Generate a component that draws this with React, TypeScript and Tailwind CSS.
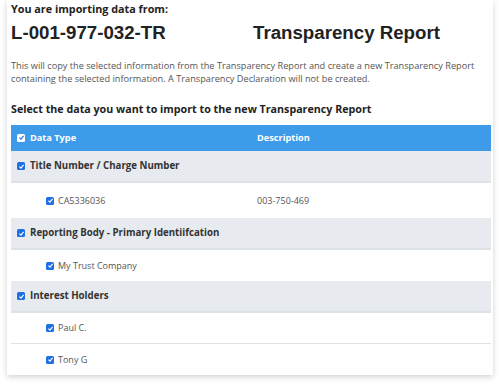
import type { FC } from 'react';

const Check: FC<{ header?: boolean }> = ({ header }) => (
  <span
    className={`inline-flex h-[8px] w-[8px] shrink-0 items-center justify-center rounded-[1.5px] ${
      header ? 'bg-white' : 'bg-[#1f6fe5]'
    }`}
  >
    <svg viewBox="0 0 10 10" className="h-[7px] w-[7px]">
      <path
        d="M2 5.2 L4.2 7.3 L8 2.8"
        fill="none"
        stroke={header ? '#1f6fe5' : 'white'}
        strokeWidth="1.6"
      />
    </svg>
  </span>
);

type Row = { label: string; desc?: string; group?: boolean };

const rows: Row[] = [
  { label: 'Title Number / Charge Number', group: true },
  { label: 'CA5336036', desc: '003-750-469' },
  { label: 'Reporting Body - Primary Identiifcation', group: true },
  { label: 'My Trust Company' },
  { label: 'Interest Holders', group: true },
  { label: 'Paul C.' },
  { label: 'Tony G' },
];

const App: FC = () => {
  return (
    <div className="h-[387px] w-[499px] overflow-hidden bg-white font-['Open_Sans',sans-serif]">
      <div className="ml-[7px] w-[486px] bg-white pl-[4px] pr-[2px] shadow-[0_2px_6px_rgba(0,0,0,0.18)]">
        <div className="pt-[1px] text-[10.8px] font-bold leading-[15px] text-[#222]">You are importing data from:</div>
        <div className="mt-[6px] grid grid-cols-2 font-['Liberation_Sans',Arial,sans-serif] text-[18.7px] font-bold leading-[22px] text-[#222]">
          <span>L-001-977-032-TR</span>
          <span className="pl-[2px]">Transparency Report</span>
        </div>
        <p className="mt-[15px] text-[9.2px] leading-[13px] text-[#555]">
          This will copy the selected information from the Transparency Report and create a new Transparency Report
          containing the selected information. A Transparency Declaration will not be created.
        </p>
        <div className="mt-[17px] text-[10.7px] font-bold leading-[15px] text-[#222]">
          Select the data you want to import to the new Transparency Report
        </div>
        <div className="mt-[8px]">
          <div className="grid h-[26px] grid-cols-2 items-center bg-[#3d9be9] text-[9.2px] font-bold text-white">
            <div className="flex items-center gap-[5px] pl-[6px]">
              <Check header />
              <span>Data Type</span>
            </div>
            <div className="pl-[6px]">Description</div>
          </div>
          {rows.map((r, i) =>
            r.group ? (
              <div
                key={i}
                className="flex h-[32px] items-center gap-[5px] border-b-2 border-[#dde2e7] bg-[#e7ebef] pl-[6px] text-[9.7px] font-bold text-[#333]"
              >
                <Check />
                <span>{r.label}</span>
              </div>
            ) : (
              <div
                key={i}
                className={`grid grid-cols-2 items-center text-[9px] text-[#555] ${
                  i === 1 ? 'h-[35px]' : 'h-[31px]'
                } ${i === 5 ? 'border-b border-[#dde2e7]' : ''}`}
              >
                <div className="flex items-center gap-[4px] pl-[35px]">
                  <Check />
                  <span>{r.label}</span>
                </div>
                <div className="pl-[6px]">{r.desc}</div>
              </div>
            )
          )}
        </div>
      </div>
    </div>
  );
};

export default App;
